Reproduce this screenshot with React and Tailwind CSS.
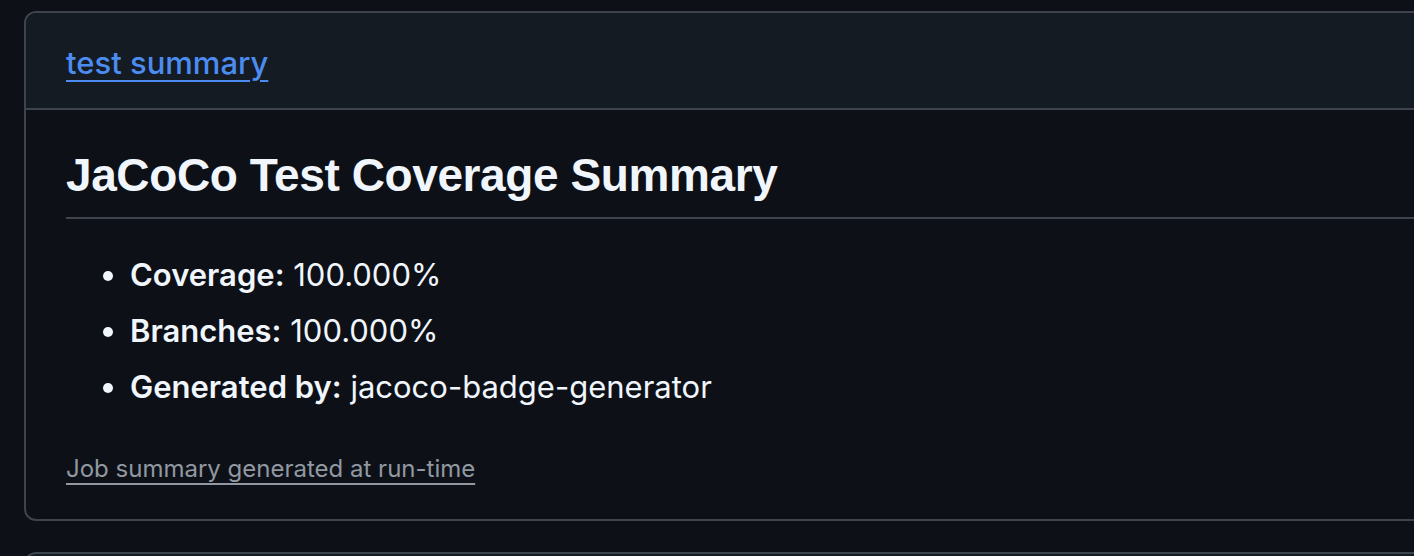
export default function App() {
  const items = [
    ["Coverage:", "100.000%"],
    ["Branches:", "100.000%"],
    ["Generated by:", "jacoco-badge-generator"],
  ];
  return (
    <div className="h-[556px] overflow-hidden bg-[#0d1117] pt-[11px] pl-[24px] font-['Inter',sans-serif]">
      <div className="w-[1420px] rounded-[12px] border-2 border-[#3d444d] bg-[#0d1117] overflow-hidden">
        <div className="h-[97px] bg-[#151b23] border-b-2 border-[#3d444d] pl-[40px] flex items-center">
          <a className="text-[31px] text-[#4c8cf0] underline underline-offset-[6px] decoration-2 font-medium leading-none pt-[3px]">
            test summary
          </a>
        </div>
        <div className="pl-[40px] pt-[35px] pb-[36px]">
          <h2 className="font-['Liberation_Sans',sans-serif] font-bold text-[46px] leading-[60px] text-[#f0f6fc] pb-[12px] border-b-2 border-[#3d444d] tracking-[-0.4px]">
            JaCoCo Test Coverage Summary
          </h2>
          <ul className="mt-[32px] list-disc pl-[64px] text-[31px] leading-[48px] text-[#f0f6fc] marker:text-[#f0f6fc]">
            {items.map(([k, v], i) => (
              <li key={k} className={i > 0 ? "mt-[8px]" : ""}>
                <span className="font-semibold">{k}</span> {v}
              </li>
            ))}
          </ul>
          <div className="mt-[46px]">
            <a className="text-[24px] text-[#9198a1] underline underline-offset-[6px] decoration-2 leading-none">
              Job summary generated at run-time
            </a>
          </div>
        </div>
      </div>
      <div className="mt-[31px] w-[1420px] h-[40px] rounded-t-[12px] border-2 border-[#3d444d] bg-[#151b23]"></div>
    </div>
  );
}
